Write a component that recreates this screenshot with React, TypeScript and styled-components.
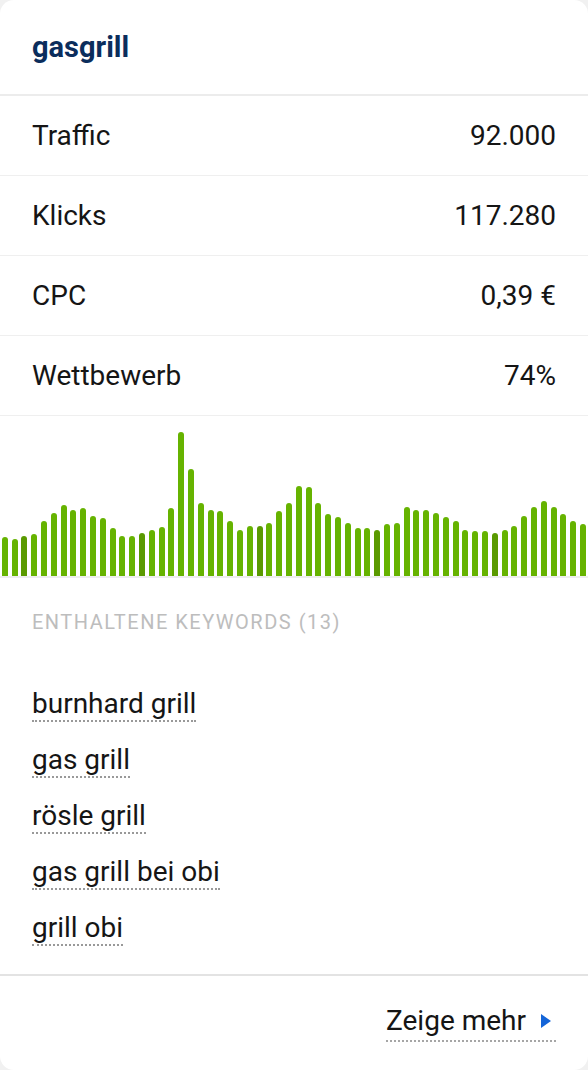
import React, { FC } from 'react'
import styled, { createGlobalStyle } from 'styled-components'

const GlobalStyle = createGlobalStyle`
    html, body {
        margin: 0;
        padding: 0;
        background: #f1f1f1;
    }
    body {
        font-family: Roboto, "Liberation Sans", Arial, sans-serif;
        -webkit-font-smoothing: antialiased;
    }
`

const stats = [
    { label: 'Traffic', value: '92.000' },
    { label: 'Klicks', value: '117.280' },
    { label: 'CPC', value: '0,39 €' },
    { label: 'Wettbewerb', value: '74%' },
]

// bar heights in px, every 12th bar is a year marker
const trend = [
    39, 37, 40, 42, 55, 63, 71, 66, 68, 60, 58, 48, 40, 40, 43, 46, 49, 68, 144, 107,
    73, 66, 65, 55, 46, 50, 50, 53, 65, 73, 90, 89, 73, 62, 59, 53, 48, 48, 46, 52,
    53, 69, 66, 66, 63, 59, 55, 46, 45, 45, 43, 46, 50, 60, 69, 75, 69, 62, 55, 52,
]

const keywords = ['burnhard grill', 'gas grill', 'rösle grill', 'gas grill bei obi', 'grill obi']

const App: FC = () => {
    return (
        <>
            <GlobalStyle />
            <Card>
                <Header>
                    <Title>gasgrill</Title>
                </Header>
                {stats.map(s => (
                    <StatRow key={s.label}>
                        <span>{s.label}</span>
                        <span>{s.value}</span>
                    </StatRow>
                ))}
                <Chart>
                    {trend.map((h, i) => (
                        <BarSlot key={i}>
                            <Bar $marker={i % 12 === 2} style={{ height: h }} />
                        </BarSlot>
                    ))}
                </Chart>
                <KeywordSection>
                    <SectionLabel>Enthaltene Keywords (13)</SectionLabel>
                    <KeywordList>
                        {keywords.map(k => (
                            <KeywordItem key={k}>
                                <KeywordLink href='#'>{k}</KeywordLink>
                            </KeywordItem>
                        ))}
                    </KeywordList>
                </KeywordSection>
                <Footer>
                    <MoreLink href='#'>
                        Zeige mehr
                        <Arrow />
                    </MoreLink>
                </Footer>
            </Card>
        </>
    )
}

const Card = styled.div`
    width: 588px;
    height: 1070px;
    background: #fff;
    border-radius: 14px;
    overflow: hidden;
    display: flex;
    flex-direction: column;
    color: #151515;
`

const Header = styled.div`
    height: 94px;
    padding: 0 32px;
    display: flex;
    align-items: center;
    border-bottom: 2px solid #ececec;
`

const Title = styled.h1`
    margin: 0;
    font-size: 29px;
    font-weight: 700;
    color: #0b2d5c;
`

const StatRow = styled.div`
    height: 79px;
    padding: 0 32px;
    display: flex;
    align-items: center;
    justify-content: space-between;
    font-size: 28px;
    border-bottom: 1px solid #efefef;
`

const Chart = styled.div`
    height: 160px;
    display: flex;
    align-items: flex-end;
    border-bottom: 2px solid #eeeeee;
`

const BarSlot = styled.div`
    flex: 1;
    display: flex;
    justify-content: center;
`

const Bar = styled.div<{ $marker: boolean }>`
    width: 6px;
    border-radius: 3px 3px 0 0;
    background: ${props => (props.$marker ? '#5a9a00' : '#66b300')};
`

const KeywordSection = styled.div`
    flex: 1;
    padding: 32px 32px 0;
    display: flex;
    flex-direction: column;
`

const SectionLabel = styled.div`
    font-size: 20px;
    color: #bdbdbd;
    text-transform: uppercase;
    letter-spacing: 1.5px;
`

const KeywordList = styled.ul`
    list-style: none;
    margin: 43px 0 0;
    padding: 0;
    display: flex;
    flex-direction: column;
`

const KeywordItem = styled.li`
    height: 56px;
    display: flex;
    align-items: center;
`

const KeywordLink = styled.a`
    font-size: 28px;
    color: #151515;
    text-decoration: none;
    border-bottom: 2px dotted #999999;
    line-height: 32px;
`

const Footer = styled.div`
    height: 94px;
    padding: 0 32px;
    display: flex;
    align-items: center;
    justify-content: flex-end;
    border-top: 2px solid #e3e3e3;
`

const MoreLink = styled.a`
    display: flex;
    align-items: center;
    gap: 15px;
    font-size: 28px;
    color: #151515;
    text-decoration: none;
    border-bottom: 2px dotted #a6a6a6;
    line-height: 34px;
    padding-bottom: 2px;
`

const Arrow = styled.span`
    width: 0;
    height: 0;
    border-top: 7px solid transparent;
    border-bottom: 7px solid transparent;
    border-left: 10px solid #1565d8;
    margin-right: 5px;
`

export default App
